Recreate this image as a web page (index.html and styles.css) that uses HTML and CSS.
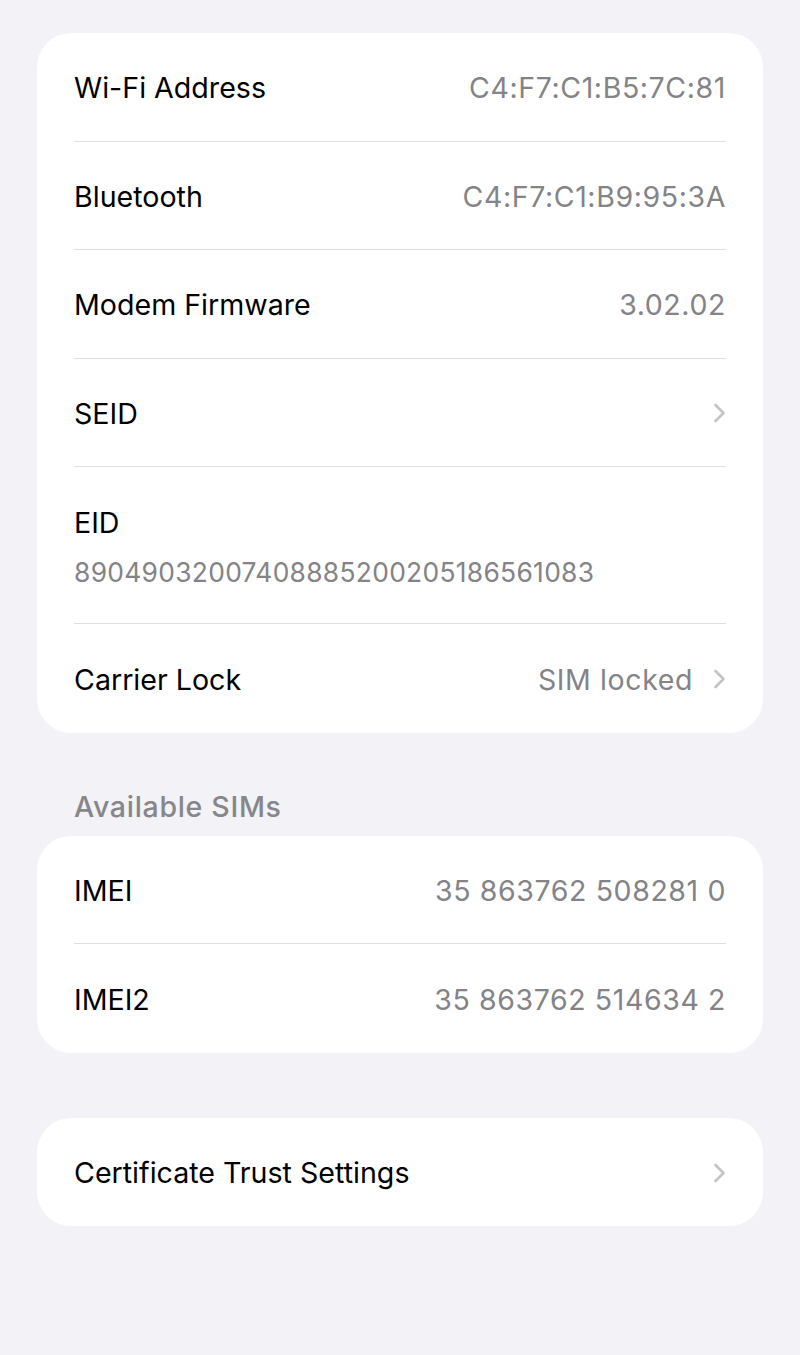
FILE: index.html
```html
<!DOCTYPE html>
<html>
<head>
<meta charset="utf-8">
<link rel="stylesheet" href="styles.css">
</head>
<body>
<div class="page">
  <div class="card first">
    <div class="row"><span class="label">Wi-Fi Address</span><span class="value">C4:F7:C1:B5:7C:81</span></div>
    <div class="row"><span class="label">Bluetooth</span><span class="value">C4:F7:C1:B9:95:3A</span></div>
    <div class="row"><span class="label">Modem Firmware</span><span class="value">3.02.02</span></div>
    <div class="row"><span class="label">SEID</span><span class="value"><svg class="chev" viewBox="0 0 12 20"><path d="M2 2 L10 10 L2 18" /></svg></span></div>
    <div class="row stack"><span class="label">EID</span><span class="sub">89049032007408885200205186561083</span></div>
    <div class="row"><span class="label">Carrier Lock</span><span class="value">SIM locked<svg class="chev" viewBox="0 0 12 20"><path d="M2 2 L10 10 L2 18" /></svg></span></div>
  </div>
  <div class="header">Available SIMs</div>
  <div class="card">
    <div class="row"><span class="label">IMEI</span><span class="value">35 863762 508281 0</span></div>
    <div class="row"><span class="label">IMEI2</span><span class="value">35 863762 514634 2</span></div>
  </div>
  <div class="card last">
    <div class="row"><span class="label">Certificate Trust Settings</span><span class="value"><svg class="chev" viewBox="0 0 12 20"><path d="M2 2 L10 10 L2 18" /></svg></span></div>
  </div>
</div>
</body>
</html>
```
FILE: styles.css
```css
html, body {
  margin: 0;
  padding: 0;
  background: #f2f2f7;
}
body {
  font-family: Inter, "Noto Sans", "Liberation Sans", sans-serif;
  width: 800px;
  height: 1355px;
  overflow: hidden;
}
.page {
  padding: 33px 37px 0 37px;
}
.card {
  background: #ffffff;
  border-radius: 34px;
  padding: 0 37px;
}
.row {
  height: 108.5px;
  display: flex;
  align-items: center;
  justify-content: space-between;
  border-bottom: 1px solid #dedee3;
  box-sizing: border-box;
}
.row:last-child {
  border-bottom: none;
}
.label {
  font-size: 28.6px;
  color: #000000;
  padding-top: 2px;
}
.value {
  font-size: 28.5px;
  color: #838388;
  letter-spacing: 0.6px;
  display: flex;
  align-items: center;
  gap: 20px;
  padding-top: 2px;
}
.chev {
  width: 13px;
  height: 20px;
  fill: none;
  stroke: #c4c4c7;
  stroke-width: 2.6;
  stroke-linecap: round;
  stroke-linejoin: round;
}
.stack {
  height: 157px;
  flex-direction: column;
  align-items: flex-start;
  justify-content: center;
  gap: 16px;
}
.sub {
  font-size: 26.4px;
  color: #838388;
  letter-spacing: 0.3px;
}
.header {
  font-size: 28.5px;
  font-weight: 500;
  letter-spacing: 0.7px;
  color: #86868b;
  padding: 56px 0 12px 37px;
}
.last {
  margin-top: 65px;
}
```
